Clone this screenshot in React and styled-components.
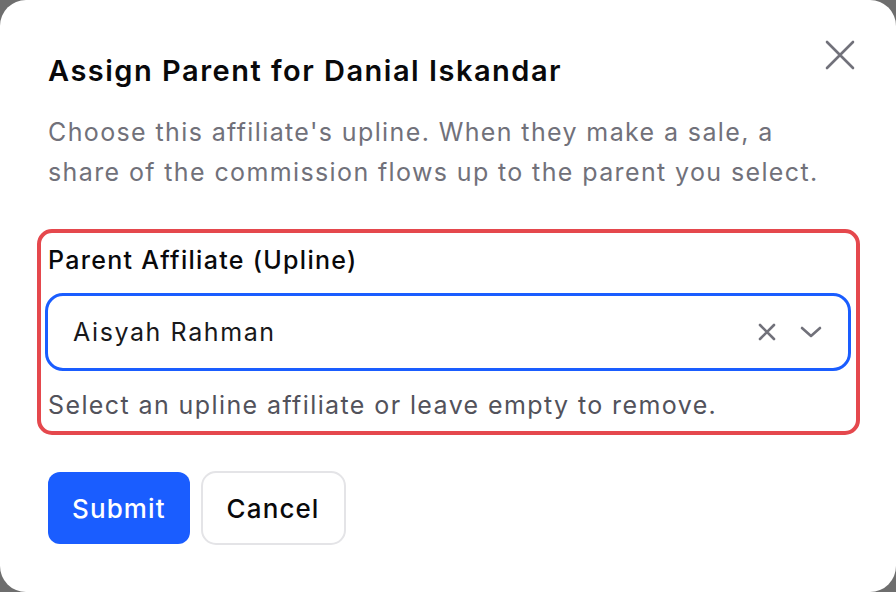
import React from "react";
import styled, { createGlobalStyle } from "styled-components";

const Global = createGlobalStyle`
  html, body { margin: 0; padding: 0; }
  body {
    background: #6e6e6e;
    font-family: Inter, "Noto Sans", "Liberation Sans", sans-serif;
    -webkit-font-smoothing: antialiased;
  }
  * { box-sizing: border-box; }
`;

const Dialog = styled.div`
  position: relative;
  width: 896px;
  height: 592px;
  background: #ffffff;
  border-radius: 26px;
  padding: 52px 36px 0 48px;
  display: flex;
  flex-direction: column;
  overflow: hidden;
`;

const CloseButton = styled.button`
  position: absolute;
  top: 40px;
  right: 41px;
  width: 30px;
  height: 30px;
  padding: 0;
  border: 0;
  background: transparent;
  color: #71717a;
  display: flex;
  align-items: center;
  justify-content: center;
  cursor: pointer;
`;

const Title = styled.h2`
  margin: 0;
  font-size: 29px;
  line-height: 38px;
  font-weight: 600;
  color: #09090b;
  letter-spacing: 1.5px;
`;

const Description = styled.p`
  margin: 22px 0 0;
  font-size: 25px;
  line-height: 40px;
  color: #71717a;
  letter-spacing: 1.38px;
  max-width: 790px;
`;

const FieldBox = styled.div`
  margin: 37px 0 0 -11px;
  width: 823px;
  border: 4px solid #e5484d;
  border-radius: 15px;
  padding: 11px 5px 10px 4px;
  display: flex;
  flex-direction: column;
`;

const Label = styled.label`
  font-size: 25px;
  line-height: 32px;
  font-weight: 500;
  color: #09090b;
  letter-spacing: 1.3px;
  padding-left: 3px;
`;

const Select = styled.div`
  margin-top: 17px;
  height: 78px;
  border: 3px solid #1a5dff;
  border-radius: 18px;
  display: flex;
  align-items: center;
  padding: 0 26px 0 25px;
`;

const Value = styled.span`
  flex: 1;
  font-size: 25px;
  letter-spacing: 1.6px;
  color: #18181b;
`;

const IconBtn = styled.span`
  display: flex;
  align-items: center;
  justify-content: center;
  color: #71717a;
  margin-left: ${(p) => p.$gap || 0}px;
`;

const Helper = styled.p`
  margin: 18px 0 0;
  font-size: 25px;
  line-height: 32px;
  color: #52525b;
  letter-spacing: 1.4px;
  padding-left: 3px;
`;

const Actions = styled.div`
  margin-top: 36px;
  display: flex;
  align-items: center;
  gap: 11px;
`;

const Button = styled.button`
  font-family: inherit;
  font-size: 26px;
  font-weight: 500;
  letter-spacing: 1.1px;
  height: ${(p) => (p.$primary ? 72 : 74)}px;
  padding: 0 24px;
  border-radius: ${(p) => (p.$primary ? 12 : 15)}px;
  border: ${(p) => (p.$primary ? "0" : "2px solid #e4e4e7")};
  background: ${(p) => (p.$primary ? "#1a5dff" : "#ffffff")};
  color: ${(p) => (p.$primary ? "#ffffff" : "#09090b")};
  cursor: pointer;
`;

export default function App() {
  return (
    <>
      <Global />
      <Dialog>
        <CloseButton aria-label="Close">
          <svg width="30" height="30" viewBox="0 0 30 30" fill="none" stroke="currentColor" strokeWidth="2.6" strokeLinecap="round">
            <path d="M2 2 L28 28 M28 2 L2 28" />
          </svg>
        </CloseButton>
        <Title>Assign Parent for Danial Iskandar</Title>
        <Description>
          Choose this affiliate's upline. When they make a sale, a share of the commission flows up to the parent you select.
        </Description>
        <FieldBox>
          <Label>Parent Affiliate (Upline)</Label>
          <Select>
            <Value>Aisyah Rahman</Value>
            <IconBtn>
              <svg width="18" height="18" viewBox="0 0 18 18" fill="none" stroke="currentColor" strokeWidth="2.6" strokeLinecap="round">
                <path d="M2 2 L16 16 M16 2 L2 16" />
              </svg>
            </IconBtn>
            <IconBtn $gap={24}>
              <svg width="22" height="12" viewBox="0 0 22 12" fill="none" stroke="currentColor" strokeWidth="2.6" strokeLinecap="round" strokeLinejoin="round">
                <path d="M2 2 L11 10 L20 2" />
              </svg>
            </IconBtn>
          </Select>
          <Helper>Select an upline affiliate or leave empty to remove.</Helper>
        </FieldBox>
        <Actions>
          <Button $primary>Submit</Button>
          <Button>Cancel</Button>
        </Actions>
      </Dialog>
    </>
  );
}
